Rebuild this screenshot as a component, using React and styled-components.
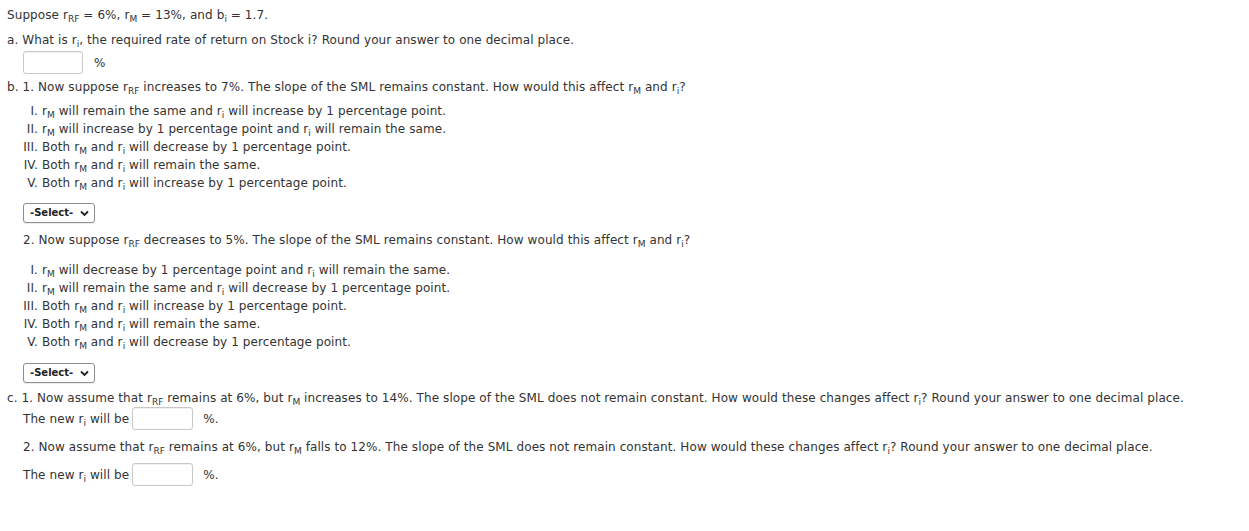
import React from "react";
import styled, { createGlobalStyle } from "styled-components";

const Global = createGlobalStyle`
  html, body { margin: 0; padding: 0; background: #fff; }
  body { font-family: "DejaVu Sans", Verdana, sans-serif; font-size: 12px; letter-spacing: 0.09px; color: #333; }
`;

const Page = styled.div`
  padding: 6px 7px;
  line-height: 18px;
`;

const Para = styled.div`
  margin-top: ${(p) => p.$mt || 0}px;
  padding-left: ${(p) => p.$indent || 0}px;
  white-space: nowrap;
`;

const Sub = styled.sub`
  font-size: 9px;
  vertical-align: -3px;
  line-height: 0;
  letter-spacing: 0;
`;

const Field = styled.input`
  box-sizing: border-box;
  width: ${(p) => p.$w || 60}px;
  height: 23px;
  border: 1px solid #c8c8c8;
  border-radius: 3px;
  box-shadow: inset 0 1px 1px rgba(0,0,0,0.06);
  padding: 0 4px;
  margin: 0;
  vertical-align: middle;
  font: inherit;
`;

const AnswerRow = styled.div`
  display: flex;
  align-items: center;
  gap: ${(p) => p.$gap || 11}px;
  margin-top: ${(p) => p.$mt || 0}px;
  padding-left: ${(p) => p.$indent || 0}px;
`;

const Unit = styled.span`
  margin-left: ${(p) => p.$ml || 0}px;
`;

const List = styled.ol`
  list-style: none;
  margin: ${(p) => p.$mt || 0}px 0 0 0;
  padding: 0;
`;

const Item = styled.li`
  display: grid;
  grid-template-columns: 31px 1fr;
  column-gap: 4px;
  line-height: 18px;
`;

const Num = styled.span`
  text-align: right;
`;

const SelectBox = styled.div`
  box-sizing: border-box;
  display: inline-flex;
  align-items: center;
  gap: 7px;
  height: 20px;
  padding: 0 5px 0 6px;
  margin-left: 16px;
  margin-top: ${(p) => p.$mt || 0}px;
  border: 1px solid #8e8e8e;
  border-radius: 3px;
  background: #fff;
  font-size: 10px;
  letter-spacing: 0;
  font-weight: bold;
  color: #222;
  box-shadow: 0 1px 1px rgba(0,0,0,0.08);
`;

const Chevron = () => (
  <svg width="9" height="7" viewBox="0 0 9 7" aria-hidden="true">
    <path d="M1 1.5 L4.5 5 L8 1.5" fill="none" stroke="#222" strokeWidth="1.8" />
  </svg>
);

const Select = ({ mt }) => (
  <SelectBox $mt={mt}>
    -Select- <Chevron />
  </SelectBox>
);

const rRF = <>r<Sub>RF</Sub></>;
const rM = <>r<Sub>M</Sub></>;
const ri = <>r<Sub>i</Sub></>;

const listB1 = [
  ["I.", <>{rM} will remain the same and {ri} will increase by 1 percentage point.</>],
  ["II.", <>{rM} will increase by 1 percentage point and {ri} will remain the same.</>],
  ["III.", <>Both {rM} and {ri} will decrease by 1 percentage point.</>],
  ["IV.", <>Both {rM} and {ri} will remain the same.</>],
  ["V.", <>Both {rM} and {ri} will increase by 1 percentage point.</>],
];

const listB2 = [
  ["I.", <>{rM} will decrease by 1 percentage point and {ri} will remain the same.</>],
  ["II.", <>{rM} will remain the same and {ri} will decrease by 1 percentage point.</>],
  ["III.", <>Both {rM} and {ri} will increase by 1 percentage point.</>],
  ["IV.", <>Both {rM} and {ri} will remain the same.</>],
  ["V.", <>Both {rM} and {ri} will decrease by 1 percentage point.</>],
];

const Options = ({ items, mt }) => (
  <List $mt={mt}>
    {items.map(([n, t]) => (
      <Item key={n}>
        <Num>{n}</Num>
        <span>{t}</span>
      </Item>
    ))}
  </List>
);

export default function App() {
  return (
    <Page>
      <Global />
      <Para>Suppose {rRF} = 6%, {rM} = 13%, and b<Sub>i</Sub> = 1.7.</Para>
      <Para $mt={7}>a. What is {ri}, the required rate of return on Stock i? Round your answer to one decimal place.</Para>
      <AnswerRow $indent={16} $mt={2}>
        <Field $w={60} />
        <span>%</span>
      </AnswerRow>
      <Para $mt={4}>b. 1. Now suppose {rRF} increases to 7%. The slope of the SML remains constant. How would this affect {rM} and {ri}?</Para>
      <Options items={listB1} mt={6} />
      <Select mt={11} />
      <Para $indent={16} $mt={8}>2. Now suppose {rRF} decreases to 5%. The slope of the SML remains constant. How would this affect {rM} and {ri}?</Para>
      <Options items={listB2} mt={12} />
      <Select mt={12} />
      <Para $mt={6}>c. 1. Now assume that {rRF} remains at 6%, but {rM} increases to 14%. The slope of the SML does not remain constant. How would these changes affect {ri}? Round your answer to one decimal place.</Para>
      <AnswerRow $indent={16} $mt={0} $gap={3}>
        <span>The new {ri} will be</span>
        <Field $w={61} />
        <Unit $ml={7}>%.</Unit>
      </AnswerRow>
      <Para $indent={16} $mt={8}>2. Now assume that {rRF} remains at 6%, but {rM} falls to 12%. The slope of the SML does not remain constant. How would these changes affect {ri}? Round your answer to one decimal place.</Para>
      <AnswerRow $indent={16} $mt={7} $gap={3}>
        <span>The new {ri} will be</span>
        <Field $w={61} />
        <Unit $ml={7}>%.</Unit>
      </AnswerRow>
    </Page>
  );
}
